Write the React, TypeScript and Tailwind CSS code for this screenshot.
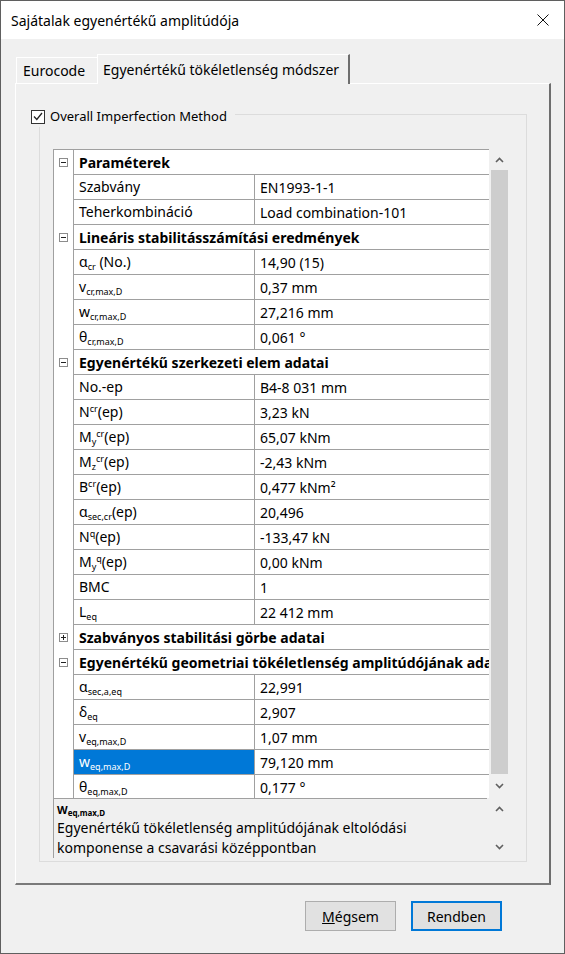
import type { ReactNode } from 'react';

type Row =
  | { kind: 'cat'; label: string; open: boolean }
  | { kind: 'prop'; label: ReactNode; value: string; selected?: boolean };

const Sub = ({ children }: { children: ReactNode }) => (
  <span className="relative top-[3px] text-[9px] leading-none">{children}</span>
);
const Sup = ({ children }: { children: ReactNode }) => (
  <span className="relative -top-[5px] text-[9px] leading-none">{children}</span>
);

const ROWS: Row[] = [
  { kind: 'cat', label: 'Paraméterek', open: true },
  { kind: 'prop', label: 'Szabvány', value: 'EN1993-1-1' },
  { kind: 'prop', label: 'Teherkombináció', value: 'Load combination-101' },
  { kind: 'cat', label: 'Lineáris stabilitásszámítási eredmények', open: true },
  { kind: 'prop', label: <>α<Sub>cr</Sub> (No.)</>, value: '14,90 (15)' },
  { kind: 'prop', label: <>v<Sub>cr,max,D</Sub></>, value: '0,37 mm' },
  { kind: 'prop', label: <>w<Sub>cr,max,D</Sub></>, value: '27,216 mm' },
  { kind: 'prop', label: <>θ<Sub>cr,max,D</Sub></>, value: '0,061 °' },
  { kind: 'cat', label: 'Egyenértékű szerkezeti elem adatai', open: true },
  { kind: 'prop', label: 'No.-ep', value: 'B4-8 031 mm' },
  { kind: 'prop', label: <>N<Sup>cr</Sup>(ep)</>, value: '3,23 kN' },
  { kind: 'prop', label: <>M<Sub>y</Sub><Sup>cr</Sup>(ep)</>, value: '65,07 kNm' },
  { kind: 'prop', label: <>M<Sub>z</Sub><Sup>cr</Sup>(ep)</>, value: '-2,43 kNm' },
  { kind: 'prop', label: <>B<Sup>cr</Sup>(ep)</>, value: '0,477 kNm²' },
  { kind: 'prop', label: <>α<Sub>sec,cr</Sub>(ep)</>, value: '20,496' },
  { kind: 'prop', label: <>N<Sup>q</Sup>(ep)</>, value: '-133,47 kN' },
  { kind: 'prop', label: <>M<Sub>y</Sub><Sup>q</Sup>(ep)</>, value: '0,00 kNm' },
  { kind: 'prop', label: 'BMC', value: '1' },
  { kind: 'prop', label: <>L<Sub>eq</Sub></>, value: '22 412 mm' },
  { kind: 'cat', label: 'Szabványos stabilitási görbe adatai', open: false },
  { kind: 'cat', label: 'Egyenértékű geometriai tökéletlenség amplitúdójának adatai', open: true },
  { kind: 'prop', label: <>α<Sub>sec,a,eq</Sub></>, value: '22,991' },
  { kind: 'prop', label: <>δ<Sub>eq</Sub></>, value: '2,907' },
  { kind: 'prop', label: <>v<Sub>eq,max,D</Sub></>, value: '1,07 mm' },
  { kind: 'prop', label: <>w<Sub>eq,max,D</Sub></>, value: '79,120 mm', selected: true },
  { kind: 'prop', label: <>θ<Sub>eq,max,D</Sub></>, value: '0,177 °' },
];

function ExpandBox({ open }: { open: boolean }) {
  return (
    <svg width="9" height="9" viewBox="0 0 9 9" className="block">
      <rect x="0.5" y="0.5" width="8" height="8" fill="white" stroke="#8c8c8c" />
      <line x1="2" y1="4.5" x2="7" y2="4.5" stroke="#222" />
      {!open && <line x1="4.5" y1="2" x2="4.5" y2="7" stroke="#222" />}
    </svg>
  );
}

function Chevron({ up }: { up?: boolean }) {
  return (
    <svg width="9" height="6" viewBox="0 0 9 6" className="block">
      <path
        d={up ? 'M1 5 L4.5 1.5 L8 5' : 'M1 1 L4.5 4.5 L8 1'}
        fill="none"
        stroke="#606060"
        strokeWidth="1.6"
      />
    </svg>
  );
}

function GridRow({ row }: { row: Row }) {
  if (row.kind === 'cat') {
    return (
      <div className="flex h-[25px] shrink-0">
        <div className="flex w-[20px] shrink-0 items-center justify-center border-r border-[#a0a0a0]">
          <ExpandBox open={row.open} />
        </div>
        <div className="flex min-w-0 flex-1 items-center overflow-hidden whitespace-nowrap border-b border-[#a0a0a0] pl-[5px] font-bold">
          {row.label}
        </div>
      </div>
    );
  }
  return (
    <div className="flex h-[25px] shrink-0">
      <div className="w-[20px] shrink-0 border-r border-[#a0a0a0]" />
      <div
        className={
          row.selected
            ? 'flex w-[181px] shrink-0 items-center whitespace-nowrap border-b border-r border-[#a0a0a0] bg-[#0078d7] pl-[5px] text-white'
            : 'flex w-[181px] shrink-0 items-center whitespace-nowrap border-b border-r border-[#a0a0a0] pl-[5px]'
        }
      >
        <span className="leading-none">{row.label}</span>
      </div>
      <div className="flex flex-1 items-center whitespace-nowrap border-b border-[#a0a0a0] pl-[5px]">
        {row.value}
      </div>
    </div>
  );
}

export default function App() {
  return (
    <div className="flex h-[954px] w-[565px] flex-col border border-[#5f5f5f] bg-[#f0f0f0] font-['Noto_Sans',sans-serif] text-[14px] text-black">
      {/* Title bar */}
      <div className="flex h-[38px] shrink-0 items-center justify-between bg-white pl-[10px] pr-[15px]">
        <span className="text-[14px]">Sajátalak egyenértékű amplitúdója</span>
        <svg width="12" height="12" viewBox="0 0 12 12">
          <path d="M0.5 0.5 L11.5 11.5 M11.5 0.5 L0.5 11.5" stroke="#111" strokeWidth="1" />
        </svg>
      </div>

      {/* Tabs */}
      <div className="mt-[15px] flex items-end pl-[15px]">
        <div className="flex h-[26px] w-[81px] items-center border-l border-t border-white pl-[6px] text-[14px]">
          Eurocode
        </div>
        <div className="relative z-10 -mb-px flex h-[30px] w-[253px] items-center border-l border-r-2 border-t border-l-white border-r-[#6e6e6e] border-t-white bg-[#f0f0f0] pl-[5px] text-[14px]">
          Egyenértékű tökéletlenség módszer
        </div>
      </div>

      {/* Tab page */}
      <div className="ml-[14px] flex h-[802px] w-[536px] flex-col border-b-2 border-l border-r-2 border-t border-b-[#7a7a7a] border-l-white border-r-[#6e6e6e] border-t-white pb-[21px] pl-[23px] pr-[22px] pt-[30px]">
        {/* Group box */}
        <div className="relative flex flex-1 flex-col border border-[#dcdcdc] pb-[3px] pl-[13px] pr-[16px] pt-[34px]">
          <div className="absolute -left-[9px] -top-[8px] flex items-center gap-[5px] bg-[#f0f0f0] pr-[8px]">
            <div className="flex h-[14px] w-[14px] items-center justify-center border border-[#333] bg-white">
              <svg width="10" height="9" viewBox="0 0 10 9">
                <path d="M1 4.5 L3.8 7.5 L9 1" fill="none" stroke="#222" strokeWidth="1.3" />
              </svg>
            </div>
            <span className="text-[13px]">Overall Imperfection Method</span>
          </div>

          {/* Property grid */}
          <div className="flex h-[649px] shrink-0">
            <div className="flex w-[436px] flex-col overflow-hidden border-l border-t border-[#a0a0a0] bg-white">
              {ROWS.map((r, i) => (
                <GridRow key={i} row={r} />
              ))}
            </div>
            <div className="ml-[1px] flex w-[19px] flex-col items-center">
              <div className="flex h-[21px] items-center justify-center">
                <Chevron up />
              </div>
              <div className="h-[604px] w-[17px] bg-[#cdcdcd]" />
              <div className="flex flex-1 items-center justify-center">
                <Chevron />
              </div>
            </div>
          </div>

          {/* Description */}
          <div className="flex h-[60px] shrink-0">
            <div className="flex w-[434px] flex-col border-l border-t border-[#a0a0a0] pl-[3px] pt-[5px]">
              <div className="h-[14px] text-[11px] font-bold leading-none">
                W<span className="relative top-[2px] text-[8px]">eq,max,D</span>
              </div>
              <div className="leading-[20px]">
                Egyenértékű tökéletlenség amplitúdójának eltolódási
                <br />
                komponense a csavarási középpontban
              </div>
            </div>
            <div className="ml-[3px] flex w-[19px] flex-col items-center justify-between py-[8px]">
              <Chevron up />
              <Chevron />
            </div>
          </div>
        </div>
      </div>

      {/* Buttons */}
      <div className="mt-[16px] flex justify-end gap-[15px] pr-[62px]">
        <button className="h-[30px] w-[91px] border border-[#adadad] bg-[#e1e1e1] text-[14px]">
          <span className="underline">M</span>égsem
        </button>
        <button className="h-[30px] w-[91px] border-2 border-[#0078d7] bg-[#e1e1e1] text-[14px]">
          Rendben
        </button>
      </div>
    </div>
  );
}
